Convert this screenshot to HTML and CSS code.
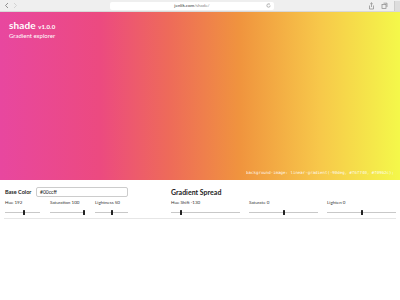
FILE: index.html
```html
<!DOCTYPE html>
<html>
<head>
<meta charset="utf-8">
<link rel="stylesheet" href="styles.css">
</head>
<body>
<div class="chrome">
  <div class="nav">
    <svg width="6" height="7" viewBox="0 0 6 7"><path d="M4 1 L1.5 3.5 L4 6" fill="none" stroke="#777" stroke-width="0.8"/></svg>
    <svg width="6" height="7" viewBox="0 0 6 7"><path d="M2 1 L4.5 3.5 L2 6" fill="none" stroke="#ccc" stroke-width="0.8"/></svg>
  </div>
  <div class="url">
    <span class="url-text">jenlik.com<span class="url-path">/shade/</span></span>
    <svg class="reload" width="5" height="5" viewBox="0 0 6 6"><path d="M5 3 A2 2 0 1 1 3.8 1.2" fill="none" stroke="#888" stroke-width="0.7"/><path d="M3.4 0.4 L4.4 1.3 L3.3 2" fill="none" stroke="#888" stroke-width="0.6"/></svg>
  </div>
  <div class="tools">
    <svg width="7" height="8" viewBox="0 0 7 8"><path d="M1.5 3.5 V7 H5.5 V3.5" fill="none" stroke="#888" stroke-width="0.7"/><path d="M3.5 5 V0.8 M2.2 2 L3.5 0.8 L4.8 2" fill="none" stroke="#888" stroke-width="0.7"/></svg>
    <svg width="7" height="8" viewBox="0 0 7 8"><rect x="1" y="2.5" width="4" height="4" fill="none" stroke="#888" stroke-width="0.7"/><path d="M2.5 1.2 H6 V5" fill="none" stroke="#888" stroke-width="0.7"/></svg>
    <span class="plus"></span>
  </div>
</div>
<header class="hero">
  <h1 class="title">shade <span class="ver">v1.0.0</span></h1>
  <p class="subtitle">Gradient explorer</p>
  <code class="css">background-image: linear-gradient(-90deg, #f6f740, #f0962c);</code>
</header>
<main class="controls">
  <section class="col col-left">
    <div class="row">
      <span class="head">Base Color</span>
      <span class="color-input">#00ccff</span>
    </div>
    <div class="sliders">
      <div class="slider"><span class="lbl">Hue 192</span><input type="range" min="0" max="360" value="192"></div>
      <div class="slider"><span class="lbl">Saturation 100</span><input type="range" min="0" max="100" value="100"></div>
      <div class="slider"><span class="lbl">Lightness 50</span><input type="range" min="0" max="100" value="50"></div>
    </div>
  </section>
  <section class="col col-right">
    <div class="row">
      <h2 class="head big">Gradient Spread</h2>
    </div>
    <div class="sliders">
      <div class="slider"><span class="lbl">Hue Shift -130</span><input type="range" min="-180" max="180" value="-130"></div>
      <div class="slider"><span class="lbl">Saturate 0</span><input type="range" min="-100" max="100" value="0"></div>
      <div class="slider"><span class="lbl">Lighten 0</span><input type="range" min="-100" max="100" value="0"></div>
    </div>
  </section>
</main>
<hr class="divider">
</body>
</html>
```
FILE: styles.css
```css
* { box-sizing: border-box; }
html, body { margin: 0; padding: 0; background: #fff; }
body { width: 400px; height: 300px; overflow: hidden; font-family: "Lato", "Noto Sans", sans-serif; color: #222; }

.chrome {
  height: 12px;
  background: #efefef;
  border-bottom: 1px solid #d8d8d8;
  display: flex;
  align-items: center;
  padding: 0 4px;
}
.nav { display: flex; gap: 2px; width: 106px; }
.url {
  width: 164px;
  height: 8px;
  background: #fff;
  border-radius: 2px;
  display: flex;
  align-items: center;
  justify-content: center;
  position: relative;
}
.url-text { font-size: 4.5px; color: #333; }
.url-path { color: #888; }
.reload { position: absolute; right: 3px; top: 1.5px; }
.tools { margin-left: auto; display: flex; gap: 6px; align-items: center; }
.plus { width: 6px; height: 10px; background: #ddd; border-left: 1px solid #ccc; margin-right: -4px; }

.hero {
  height: 168px;
  background: linear-gradient(90deg, #e8479f 0%, #ec4a80 25%, #ee6a5a 42%, #f0943e 60%, #f7c84a 80%, #f4f84a 100%);
  position: relative;
  padding: 8px 9px;
  color: #fff;
}
.title { margin: 0; font-size: 10px; font-weight: 700; line-height: 11px; letter-spacing: 0.1px; }
.ver { font-size: 6px; font-weight: 700; }
.subtitle { margin: 0; font-size: 6px; line-height: 7px; }
.css {
  position: absolute;
  right: 6px;
  bottom: 5px;
  font-family: "DejaVu Sans Mono", monospace;
  font-size: 4.1px;
  color: #fff;
  opacity: 0.9;
}

.controls {
  display: grid;
  grid-template-columns: 123px 225px;
  column-gap: 43px;
  padding: 7px 4px 0 5px;
}
.row { display: flex; align-items: center; height: 10px; }
.head { font-size: 5.5px; font-weight: 700; margin: 0; width: 31px; color: #222; }
.head.big { font-size: 7px; width: auto; }
.color-input {
  width: 92px;
  height: 10px;
  border: 1px solid #ccc;
  border-radius: 2px;
  font-size: 5px;
  line-height: 8px;
  padding: 0 3px;
  color: #222;
  background: #fff;
}
.sliders { display: flex; justify-content: space-between; margin-top: 3px; }
.col-left .slider { width: 35px; }
.col-left .slider:last-child { width: 33px; }
.col-right .slider { width: 69px; }
.slider { display: flex; flex-direction: column; }
.lbl { font-size: 4.5px; line-height: 6px; color: #333; }
input[type=range] {
  -webkit-appearance: none;
  appearance: none;
  width: 100%;
  height: 7px;
  margin: 3px 0 0;
  background: transparent;
}
input[type=range]::-webkit-slider-runnable-track {
  height: 1px;
  background: #c8c8c8;
}
input[type=range]::-webkit-slider-thumb {
  -webkit-appearance: none;
  width: 2px;
  height: 5px;
  background: #222;
  border-radius: 0.5px;
  margin-top: -2px;
}
.divider {
  border: 0;
  border-top: 1px solid #e6e6e6;
  margin: 2px 4px 0;
}
```
